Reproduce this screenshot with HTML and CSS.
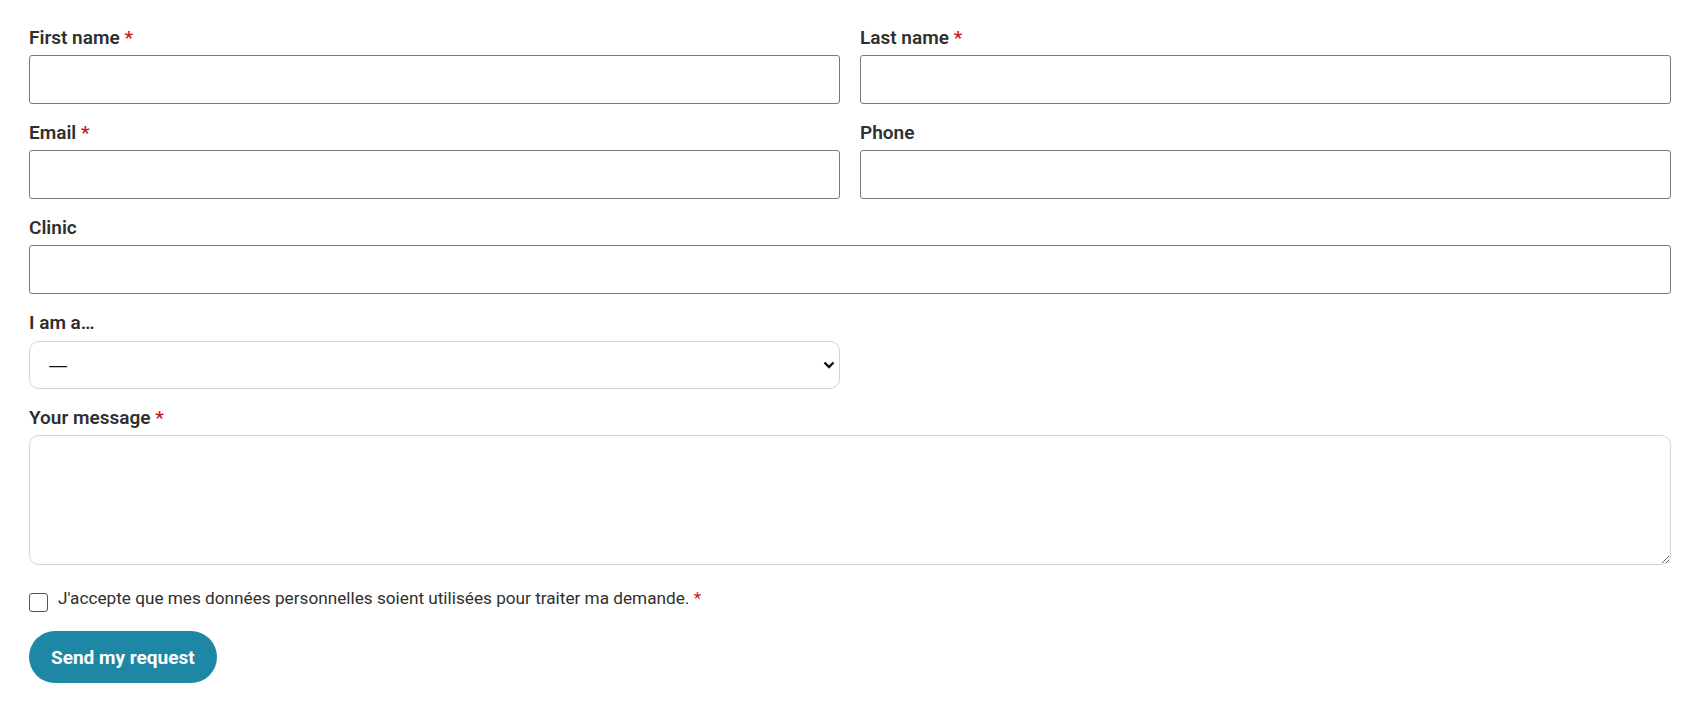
FILE: index.html
```html
<!DOCTYPE html>
<html lang="en">
<head>
<meta charset="utf-8">
<title>Contact form</title>
<link rel="stylesheet" href="styles.css">
</head>
<body>
<form class="form">
  <div class="row">
    <div class="field">
      <label class="label">First name <span class="req">*</span></label>
      <input class="input" type="text">
    </div>
    <div class="field">
      <label class="label">Last name <span class="req">*</span></label>
      <input class="input" type="text">
    </div>
  </div>
  <div class="row">
    <div class="field">
      <label class="label">Email <span class="req">*</span></label>
      <input class="input" type="email">
    </div>
    <div class="field">
      <label class="label">Phone</label>
      <input class="input" type="tel">
    </div>
  </div>
  <div class="field">
    <label class="label">Clinic</label>
    <input class="input" type="text">
  </div>
  <div class="row">
    <div class="field">
      <label class="label">I am a…</label>
      <select class="select"><option>—</option></select>
    </div>
    <div></div>
  </div>
  <div class="field">
    <label class="label">Your message <span class="req">*</span></label>
    <textarea class="textarea"></textarea>
  </div>
  <label class="consent">
    <input class="check" type="checkbox">
    <span class="consent-text">J'accepte que mes données personnelles soient utilisées pour traiter ma demande. <span class="req">*</span></span>
  </label>
  <button class="btn" type="button">Send my request</button>
</form>
</body>
</html>
```
FILE: styles.css
```css
html, body {
  margin: 0;
  background: #ffffff;
}
body {
  font-family: Roboto, "Liberation Sans", sans-serif;
  color: #2f2f2f;
}
.form {
  padding: 24px 29px 0 29px;
}
.row {
  display: grid;
  grid-template-columns: 1fr 1fr;
  column-gap: 20px;
}
.field {
  display: flex;
  flex-direction: column;
  margin-bottom: 15px;
}
.label {
  font-size: 19px;
  line-height: 27px;
  font-weight: 600;
  margin-bottom: 4px;
  color: #2f2f2f;
}
.req {
  color: #cc1818;
}
.input {
  box-sizing: border-box;
  height: 49px;
  border: 1px solid #7a7a7a;
  border-radius: 3px;
  background: #fff;
  font: inherit;
  padding: 0 16px;
}
.select {
  box-sizing: border-box;
  height: 48px;
  margin-top: 1px;
  border: 1px solid #d4d4d4;
  border-radius: 10px;
  background: #fff url("data:image/svg+xml;utf8,<svg xmlns='http://www.w3.org/2000/svg' width='12' height='8' viewBox='0 0 12 8'><path d='M1.5 1.5 6 6l4.5-4.5' fill='none' stroke='%23111' stroke-width='2.4'/></svg>") no-repeat right 4px center;
  -webkit-appearance: none;
  appearance: none;
  font-family: "Liberation Sans", Arial, sans-serif;
  font-size: 18px;
  color: #111;
  padding: 0 19px;
}
.textarea {
  box-sizing: border-box;
  height: 130px;
  border: 1px solid #d4d4d4;
  border-radius: 10px;
  background: #fff;
  font: inherit;
  resize: vertical;
}
.consent {
  display: flex;
  align-items: flex-start;
  gap: 10px;
  margin-top: 20px;
  font-size: 17.2px;
  line-height: 26px;
  color: #2f2f2f;
}
.check {
  box-sizing: border-box;
  width: 19px;
  height: 19px;
  margin: 8px 0 0 0;
  -webkit-appearance: none;
  appearance: none;
  border: 1px solid #555;
  border-radius: 3px;
  background: #fff;
  flex: none;
}
.btn {
  display: block;
  margin-top: 19px;
  height: 52px;
  padding: 0 22px;
  border: 0;
  border-radius: 26px;
  background: #1e87a5;
  color: #fff;
  font-family: Roboto, "Liberation Sans", sans-serif;
  font-size: 19px;
  font-weight: 700;
}
```
